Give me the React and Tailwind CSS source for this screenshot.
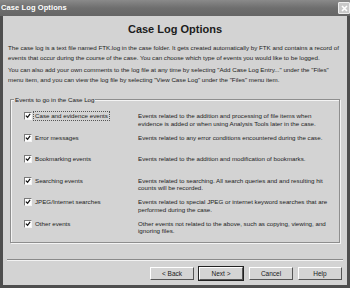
import React from "react";

const rows = [
  {
    label: "Case and evidence events",
    focus: true,
    desc: [
      "Events related to the addition and processing of file items when",
      "evidence is added or when using Analysis Tools later in the case.",
    ],
  },
  {
    label: "Error messages",
    desc: ["Events related to any error conditions encountered during the case."],
  },
  {
    label: "Bookmarking events",
    desc: ["Events related to the addition and modification of bookmarks."],
  },
  {
    label: "Searching events",
    desc: [
      "Events related to searching. All search queries and and resulting hit",
      "counts will be recorded.",
    ],
  },
  {
    label: "JPEG/Internet searches",
    desc: [
      "Events related to special JPEG or internet keyword searches that are",
      "performed during the case.",
    ],
  },
  {
    label: "Other events",
    desc: [
      "Other events not related to the above, such as copying, viewing, and",
      "ignoring files.",
    ],
  },
];

function CheckBox() {
  return (
    <span className="w-[8px] h-[8px] bg-white border-t border-l border-t-[#7a7a7a] border-l-[#7a7a7a] border-b border-r border-b-[#f4f4f4] border-r-[#f4f4f4] flex items-center justify-center shrink-0">
      <svg width="6" height="6" viewBox="0 0 7 7">
        <path d="M1 3 L3 5 L6 1" stroke="#111" strokeWidth="1.4" fill="none" />
      </svg>
    </span>
  );
}

function Button({ children, isDefault }) {
  return (
    <div
      className={
        "h-[13px] w-[44px] flex items-center justify-center bg-[#d4d4d4] text-[6.5px] text-[#1a1a1a] border-t border-l border-t-white border-l-white border-b border-r border-b-[#555] border-r-[#555] " +
        (isDefault ? "outline outline-1 outline-[#222]" : "")
      }
    >
      {children}
    </div>
  );
}

export default function App() {
  return (
    <div
      className="w-[350px] h-[288px] bg-[#4e4e4e] px-[3px] pb-[3px] flex flex-col"
      style={{ fontFamily: '"Liberation Sans", Arial, sans-serif' }}
    >
      {/* title bar */}
      <div className="h-[16px] bg-gradient-to-b from-[#8a8a8a] via-[#6e6e6e] to-[#666] flex items-center justify-between pl-[1px] pr-[0px] -mx-[3px] px-[4px]">
        <span className="text-white font-bold text-[7.5px] tracking-[0.1px]">
          Case Log Options
        </span>
        <div className="w-[12px] h-[12px] bg-[#c9c9c9] border border-[#eee] rounded-[1px] flex items-center justify-center">
          <svg width="7" height="7" viewBox="0 0 7 7">
            <path d="M1 1 L6 6 M6 1 L1 6" stroke="white" strokeWidth="1.6" />
          </svg>
        </div>
      </div>

      {/* body */}
      <div className="flex-1 bg-[#d3d3d3] flex flex-col text-[#1c1c1c]">
        <div className="text-center font-bold text-[11px] leading-[12px] mt-[7px]">
          Case Log Options
        </div>

        <div className="px-[5px] mt-[8px] text-[6.2px] leading-[10px] whitespace-nowrap">
          <div>
            The case log is a text file named FTK.log in the case folder. It gets created automatically by FTK and contains a record of
          </div>
          <div>
            events that occur during the course of the case. You can choose which type of events you would like to be logged.
          </div>
          <div className="mt-[2px]">
            You can also add your own comments to the log file at any time by selecting "Add Case Log Entry..." under the "Files"
          </div>
          <div>
            menu item, and you can view the log file by selecting "View Case Log" under the "Files" menu item.
          </div>
        </div>

        {/* group box */}
        <div className="relative mx-[7px] mt-[14px] h-[144px] border border-[#8e8e8e] shadow-[inset_1px_1px_0_#f4f4f4,1px_1px_0_#f4f4f4]">
          <span className="absolute -top-[5px] left-[3px] px-[1px] bg-[#d3d3d3] text-[6.2px] leading-[9px]">
            Events to go in the Case Log
          </span>
          <div className="flex flex-col pt-[12px]">
            {rows.map((r, i) => (
              <div key={i} className="flex h-[21.6px] text-[6.2px] leading-[7.5px]">
                <div className="w-[127px] pl-[13px] flex items-start gap-[2px] pt-[0px]">
                  <CheckBox />
                  <span
                    className={
                      "whitespace-nowrap px-[1px] " +
                      (r.focus ? "outline outline-1 outline-dotted outline-[#555]" : "")
                    }
                  >
                    {r.label}
                  </span>
                </div>
                <div className="whitespace-nowrap">
                  {r.desc.map((d, j) => (
                    <div key={j}>{d}</div>
                  ))}
                </div>
              </div>
            ))}
          </div>
        </div>

        <div className="mt-auto mx-[4px] mb-[6px] border-t border-t-[#8a8a8a] border-b border-b-[#f2f2f2]" />
        <div className="flex justify-end pr-[5px] mb-[5px]">
          <div className="flex gap-[4px]">
            <Button>&lt; Back</Button>
            <div className="ml-[1px]">
              <Button isDefault>Next &gt;</Button>
            </div>
            <div className="ml-[2px]">
              <Button>Cancel</Button>
            </div>
            <div className="ml-[1px]">
              <Button>Help</Button>
            </div>
          </div>
        </div>
      </div>
    </div>
  );
}
